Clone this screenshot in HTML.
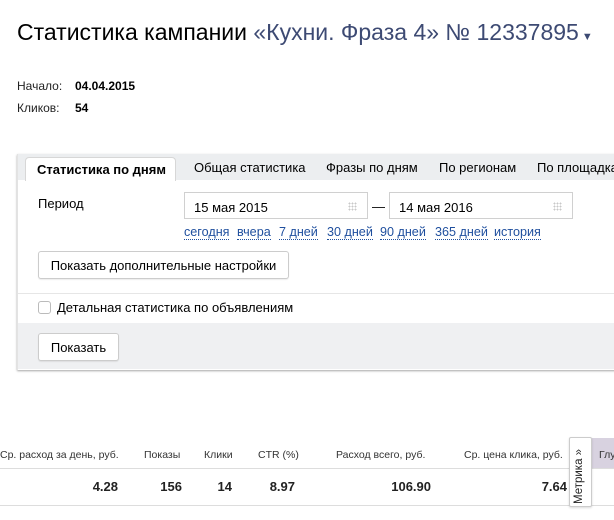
<!DOCTYPE html>
<html><head><meta charset="utf-8"><style>
*{margin:0;padding:0;box-sizing:border-box}
body{width:614px;height:520px;overflow:hidden;background:#fff;font-family:"Liberation Sans",sans-serif;color:#000;position:relative;font-size:13px}
.a{position:absolute;white-space:nowrap}
.lnk{position:absolute;top:226px;font-size:12.6px;color:#1f4f9e;border-bottom:1px dotted #1f4f9e;line-height:13px;white-space:nowrap}
.btn{position:absolute;border:1px solid #ccc;border-radius:3px;background:#fff;font-size:13px;text-align:center;box-shadow:0 1px 1px rgba(0,0,0,.08)}
.inp{position:absolute;border:1px solid #d0d0d0;height:27px;background:#fff;font-size:13px;padding:7px 0 0 9px}
.dots{position:absolute;right:10px;top:9px;width:9px;height:9px;background:radial-gradient(circle,#c8c8c8 1px,transparent 1px) 0 0/3px 3px}
.th{font-size:10.5px;color:#333}
.td{font-size:13px;font-weight:bold;color:#222}
</style></head><body>
<div class="a" style="left:17px;top:19px;font-size:23px;color:#000">Статистика кампании <span style="color:#3d4a73">«Кухни. Фраза 4» № 12337895</span><span style="font-size:11px;color:#3d4a73"> ▼</span></div>
<div class="a" style="left:17px;top:79px;font-size:12px;color:#222">Начало:</div>
<div class="a" style="left:75px;top:79px;font-size:12px;font-weight:bold">04.04.2015</div>
<div class="a" style="left:17px;top:101px;font-size:12px;color:#222">Кликов:</div>
<div class="a" style="left:75px;top:101px;font-size:12px;font-weight:bold">54</div>

<div class="a" style="left:17px;top:154px;width:620px;height:216px;background:#fff;border-left:1px solid #e3e3e3;box-shadow:0 1px 2px rgba(0,0,0,.35)"></div>
<div class="a" style="left:18px;top:154px;width:600px;height:26px;background:#eceef0"></div>
<div class="a" style="left:25px;top:157px;width:151px;height:24px;background:#fff;border:1px solid #d7d7d7;border-bottom:none;border-radius:4px 4px 0 0;font-weight:bold;font-size:13px;padding:4px 0 0 11px">Статистика по дням</div>
<div class="a" style="left:194px;top:160px">Общая статистика</div>
<div class="a" style="left:326px;top:160px">Фразы по дням</div>
<div class="a" style="left:439px;top:160px">По регионам</div>
<div class="a" style="left:537px;top:160px">По площадкам</div>

<div class="a" style="left:38px;top:196px">Период</div>
<div class="inp" style="left:184px;top:192px;width:184px">15 мая 2015<div class="dots"></div></div>
<div class="a" style="left:372px;top:199px">—</div>
<div class="inp" style="left:389px;top:192px;width:184px">14 мая 2016<div class="dots"></div></div>
<span class="lnk" style="left:184px">сегодня</span>
<span class="lnk" style="left:237px">вчера</span>
<span class="lnk" style="left:279px">7 дней</span>
<span class="lnk" style="left:327px">30 дней</span>
<span class="lnk" style="left:380px">90 дней</span>
<span class="lnk" style="left:435px">365 дней</span>
<span class="lnk" style="left:494px">история</span>
<div class="btn" style="left:38px;top:251px;width:251px;height:28px;padding-top:6px">Показать дополнительные настройки</div>
<div class="a" style="left:18px;top:293px;width:600px;height:1px;background:#e6e6e6"></div>
<div class="a" style="left:38px;top:301px;width:13px;height:13px;border:1px solid #bbb;border-radius:3px;background:#fff"></div>
<div class="a" style="left:57px;top:300px">Детальная статистика по объявлениям</div>
<div class="a" style="left:18px;top:323px;width:600px;height:46px;background:#eff0f2"></div>
<div class="btn" style="left:38px;top:333px;width:81px;height:28px;padding-top:6px">Показать</div>

<div class="a th" style="left:0px;top:449px">Ср. расход за день, руб.</div>
<div class="a th" style="left:144px;top:449px">Показы</div>
<div class="a th" style="left:204px;top:449px">Клики</div>
<div class="a th" style="left:258px;top:449px">CTR (%)</div>
<div class="a th" style="left:336px;top:449px">Расход всего, руб.</div>
<div class="a th" style="left:464px;top:449px">Ср. цена клика, руб.</div>
<div class="a" style="left:592px;top:438px;width:22px;height:31px;background:#d8d2e0"></div>
<div class="a th" style="left:599px;top:449px">Глу</div>
<div class="a" style="left:0;top:468px;width:614px;height:1px;background:#ddd"></div>
<div class="a" style="left:0;top:505px;width:614px;height:1px;background:#ddd"></div>
<div class="a td" style="right:496px;top:479px">4.28</div>
<div class="a td" style="right:432px;top:479px">156</div>
<div class="a td" style="right:382px;top:479px">14</div>
<div class="a td" style="right:319px;top:479px">8.97</div>
<div class="a td" style="right:183px;top:479px">106.90</div>
<div class="a td" style="right:47px;top:479px">7.64</div>
<div class="a" style="left:569px;top:437px;width:23px;height:70px;background:#fff;border:1px solid #ccc;border-radius:2px;box-shadow:0 1px 2px rgba(0,0,0,.15)"></div>
<div class="a" style="left:573px;top:504px;transform:rotate(-90deg);transform-origin:0 0;font-size:11.5px;color:#222">Метрика »</div>
</body></html>
